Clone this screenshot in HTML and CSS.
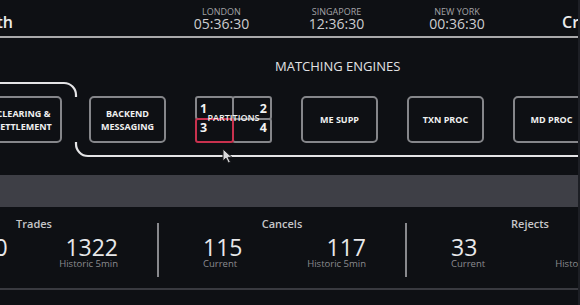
FILE: index.html
```html
<!DOCTYPE html>
<html>
<head>
    <meta charset="UTF-8">
    <title>Market Health</title>
    <link rel="stylesheet" href="styles.css">
</head>
<body>
    <div class="screen">
        <header class="topbar">
            <div class="title">Market Health</div>
            <div></div>
            <div class="clock">
                <div class="clock-city">LONDON</div>
                <div class="clock-time">05:36:30</div>
            </div>
            <div class="clock">
                <div class="clock-city">SINGAPORE</div>
                <div class="clock-time">12:36:30</div>
            </div>
            <div class="clock">
                <div class="clock-city">NEW YORK</div>
                <div class="clock-time">00:36:30</div>
            </div>
            <div></div>
            <div class="title title-right">Cross Market</div>
        </header>

        <section class="diagram">
            <svg class="bracket" width="580" height="137" viewBox="0 38 580 137">
                <path d="M -5 83 H 64 A 12 12 0 0 1 76 95 V 97" />
                <path d="M 76 142 V 144 A 12 12 0 0 0 88 156 H 590" />
            </svg>

            <h2 class="diagram-title">MATCHING ENGINES</h2>

            <div class="nodes">
                <div class="node node-first">CLEARING &amp;<br>SETTLEMENT</div>
                <div class="node">BACKEND<br>MESSAGING</div>
                <div class="partitions">
                    <div class="cell cell-top">1</div>
                    <div class="cell cell-top cell-right">2</div>
                    <div class="cell cell-active">3</div>
                    <div class="cell cell-right">4</div>
                    <span class="partitions-label">PARTITIONS</span>
                </div>
                <div class="node">ME SUPP</div>
                <div class="node">TXN PROC</div>
                <div class="node">MD PROC</div>
            </div>

            <svg class="cursor" width="12" height="16" viewBox="0 0 12 16">
                <path d="M1 1 L1 13 L4 10.2 L6.4 15 L8.4 14 L6.1 9.4 L10 9.4 Z" />
            </svg>
        </section>

        <div class="band"></div>

        <section class="stats">
            <div class="group">
                <div class="group-label">Trades</div>
                <div class="values">
                    <div class="value">
                        <div class="value-num">1290</div>
                        <div class="value-label">Current</div>
                    </div>
                    <div class="value historic">
                        <div class="value-num">1322</div>
                        <div class="value-label">Historic 5min</div>
                    </div>
                </div>
            </div>
            <div class="divider"></div>
            <div class="group">
                <div class="group-label">Cancels</div>
                <div class="values">
                    <div class="value">
                        <div class="value-num">115</div>
                        <div class="value-label">Current</div>
                    </div>
                    <div class="value historic">
                        <div class="value-num">117</div>
                        <div class="value-label">Historic 5min</div>
                    </div>
                </div>
            </div>
            <div class="divider"></div>
            <div class="group">
                <div class="group-label">Rejects</div>
                <div class="values">
                    <div class="value">
                        <div class="value-num">33</div>
                        <div class="value-label">Current</div>
                    </div>
                    <div class="value historic">
                        <div class="value-num">31</div>
                        <div class="value-label">Historic 5min</div>
                    </div>
                </div>
            </div>
        </section>
    </div>
</body>
</html>
```

FILE: styles.css
```css
body {
    margin: 0;
    padding: 0;
    background-color: #0e1014;
    font-family: "Open Sans", "Noto Sans", sans-serif;
    overflow: hidden;
}

.screen {
    width: 578px;
    height: 305px;
    border-right: 2px solid #1d1f25;
    overflow: hidden;
    background-color: #0e1014;
}

/* header */

.topbar {
    display: grid;
    grid-template-columns: 200px 151px 115px 115px 126px 42px auto;
    align-items: start;
    height: 36px;
    margin-left: -187px;
    border-bottom: 2px solid #a9a9ab;
}

.title {
    padding-top: 12px;
    font-size: 16px;
    line-height: 20px;
    font-weight: 600;
    color: #ececec;
    text-align: right;
    white-space: nowrap;
}

.title-right {
    text-align: left;
}

.clock {
    padding-top: 7px;
    text-align: center;
}

.clock-city {
    font-size: 9px;
    line-height: 10px;
    color: #a3a3a6;
}

.clock-time {
    font-size: 14px;
    line-height: 14px;
    color: #cdcdcf;
}

/* matching engines diagram */

.diagram {
    position: relative;
    height: 137px;
}

.bracket {
    position: absolute;
    left: 0;
    top: 0;
}

.bracket path {
    fill: none;
    stroke: #e4e4e6;
    stroke-width: 2.2;
}

.diagram-title {
    margin: 0 0 0 275px;
    padding-top: 20px;
    font-size: 13px;
    line-height: 16px;
    font-weight: 400;
    color: #e2e2e4;
}

.nodes {
    display: flex;
    gap: 29px;
    margin-top: 22px;
    margin-left: -15px;
}

.node {
    flex: none;
    width: 77px;
    height: 47px;
    box-sizing: border-box;
    border: 2px solid #85868a;
    border-radius: 5px;
    display: flex;
    align-items: center;
    justify-content: center;
    text-align: center;
    font-size: 9px;
    line-height: 13px;
    font-weight: 700;
    color: #f0f0f0;
    white-space: nowrap;
}

.node-first {
    margin-right: -2px;
}

.partitions {
    flex: none;
    position: relative;
    display: grid;
    grid-template-columns: 39px 38px;
    grid-template-rows: 24px 23px;
    width: 77px;
    height: 47px;
}

.cell {
    display: flex;
    align-items: flex-start;
    justify-content: flex-start;
    margin-top: -2px;
    padding: 1px 3px 0 3px;
    border: 2px solid #85868a;
    border-radius: 3px;
    font-size: 12.5px;
    line-height: 13px;
    font-weight: 700;
    color: #f2f2f2;
}

.cell-top {
    align-items: flex-end;
    margin-top: 0;
    padding: 0 3px 3px 3px;
}

.cell-right {
    justify-content: flex-end;
    margin-left: -2px;
}

.cell-active {
    position: relative;
    z-index: 1;
    border-color: #c8314e;
}

.partitions-label {
    position: absolute;
    left: 0;
    right: 0;
    top: 17px;
    z-index: 2;
    text-align: center;
    font-size: 9px;
    line-height: 10px;
    font-weight: 600;
    color: #f2f2f2;
}

.cursor {
    position: absolute;
    left: 222px;
    top: 110px;
}

.cursor path {
    fill: #d8d8da;
    stroke: #1a1a1d;
    stroke-width: 1;
}

/* stats */

.band {
    height: 32px;
    background-color: #3e3f46;
}

.stats {
    display: flex;
    height: 81px;
    margin-left: -89px;
    border-bottom: 2px solid #393a40;
}

.group {
    flex: none;
    width: 246px;
    padding-top: 10px;
}

.group-label {
    text-align: center;
    font-size: 11px;
    line-height: 14px;
    font-weight: 600;
    color: #c6c6c9;
}

.values {
    display: flex;
    justify-content: space-between;
    margin-top: 5px;
    padding: 0 39px 0 44px;
}

.value-num {
    font-size: 23px;
    line-height: 23px;
    color: #e8e8ea;
}

.value-label {
    font-size: 9.5px;
    line-height: 10px;
    color: #8b8b8f;
    white-space: nowrap;
}

.historic {
    text-align: right;
}

.divider {
    flex: none;
    width: 2px;
    height: 54px;
    margin-top: 16px;
    background-color: #88898d;
}
```
